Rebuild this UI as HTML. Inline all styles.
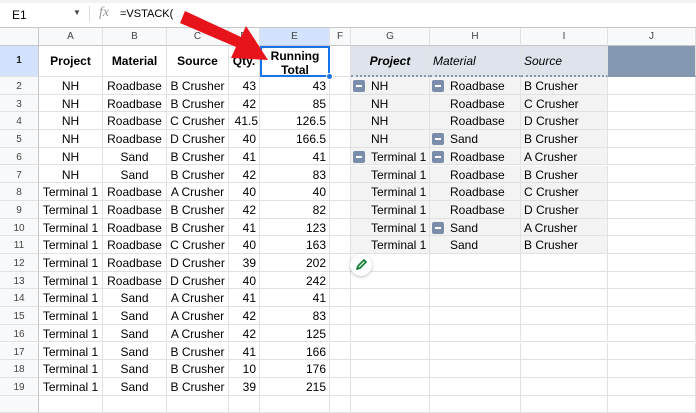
<!DOCTYPE html><html><head><style>
*{box-sizing:border-box;margin:0;padding:0}
body{width:696px;height:400px;overflow:hidden;background:#fff;font-family:"Liberation Sans",Arial,sans-serif;font-size:12px;color:#000;position:relative}
.r{position:absolute;left:0;width:696px;height:17.7px}
.c{position:absolute;top:0;height:100%;border-right:1px solid #e1e1e1;border-bottom:1px solid #e1e1e1;white-space:nowrap;overflow:visible;line-height:19px;padding:0 3px}
.n{left:0;width:39px;background:#f8f9fa;text-align:center;font-size:10px;color:#444;border-right:1px solid #c7c7c7}
.a{left:39px;width:64px;text-align:center}.b{left:103px;width:64px;text-align:center}.cc{left:167px;width:62px;text-align:center;padding:0}
.d{left:229px;width:31px;text-align:right}.e{left:260px;width:70px;text-align:right}.f{left:330px;width:21px}
.g{left:351px;width:79px}.h{left:430px;width:91px}.i{left:521px;width:87px}.j{left:608px;width:88px}
.p{background:#f3f3f3}
.g.p{padding-left:20px}.h.p{padding-left:20px}
.m{position:absolute;top:3px;width:12px;height:12px;background:#7a8dab;border-radius:2px}
.m:after{content:"";position:absolute;left:3px;top:5px;width:6px;height:2px;background:#fff}
.hd .c{background:#f8f9fa;text-align:center;font-size:10px;color:#444;line-height:18px;border-bottom:1px solid #c7c7c7}
.r1 .c{line-height:30px;font-weight:bold}
</style></head><body>
<div style="position:absolute;left:0;top:0;width:696px;height:28px;border-bottom:1px solid #c7c7c7;background:#fff;border-top:3px solid #f1f3f4">
<span style="position:absolute;left:12px;top:5px;font-size:12px">E1</span>
<span style="position:absolute;left:73px;top:5px;font-size:8px;color:#444">▼</span>
<span style="position:absolute;left:89px;top:3px;width:1px;height:16px;background:#ddd"></span>
<span style="position:absolute;left:99px;top:2px;font-family:'Liberation Serif',serif;font-style:italic;color:#999;font-size:14px">fx</span>
<span style="position:absolute;left:120px;top:5px;font-size:11px">=VSTACK(</span>
</div>
<div class="r hd" style="top:28px;height:18px">
<div class="c n" style="border-bottom:1px solid #c7c7c7"></div><div class="c a">A</div><div class="c b">B</div><div class="c cc">C</div><div class="c d">D</div><div class="c e" style="background:#d3e3fd;text-align:center">E</div><div class="c f">F</div><div class="c g">G</div><div class="c h">H</div><div class="c i">I</div><div class="c j">J</div>
</div>
<div class="r r1" style="top:46px;height:31px">
<div class="c n" style="background:#d3e3fd;font-weight:bold;color:#222;line-height:30px">1</div><div class="c a">Project</div><div class="c b">Material</div><div class="c cc">Source</div><div class="c d" style="text-align:center;padding:0">Qty.</div>
<div class="c e" style="text-align:center;line-height:14px;padding-top:1px;border:2px solid #1a73e8">Running<br>Total</div><div class="c f"></div>
<div class="c g" style="background:#dfe4ec;font-style:italic;text-align:center;border-bottom:2px dotted #8497b0">Project</div>
<div class="c h" style="background:#dfe4ec;font-style:italic;font-weight:normal;border-bottom:2px dotted #8497b0">Material</div>
<div class="c i" style="background:#dfe4ec;font-style:italic;font-weight:normal;border-bottom:2px dotted #8497b0">Source</div>
<div class="c j" style="background:#8497b0;border-bottom:2px solid #8497b0"></div>
</div>
<div style="position:absolute;left:326px;top:73px;width:7px;height:7px;border-radius:50%;background:#1a73e8;border:1px solid #fff;z-index:5"></div>

<div class="r" style="top:77px"><div class="c n">2</div><div class="c a">NH</div><div class="c b">Roadbase</div><div class="c cc">B Crusher</div><div class="c d">43</div><div class="c e">43</div><div class="c f"></div><div class="c g p"><span class="m" style="left:2px"></span>NH</div><div class="c h p"><span class="m" style="left:2px"></span>Roadbase</div><div class="c i p">B Crusher</div><div class="c j"></div></div>
<div class="r" style="top:94.7px"><div class="c n">3</div><div class="c a">NH</div><div class="c b">Roadbase</div><div class="c cc">B Crusher</div><div class="c d">42</div><div class="c e">85</div><div class="c f"></div><div class="c g p">NH</div><div class="c h p">Roadbase</div><div class="c i p">C Crusher</div><div class="c j"></div></div>
<div class="r" style="top:112.4px"><div class="c n">4</div><div class="c a">NH</div><div class="c b">Roadbase</div><div class="c cc">C Crusher</div><div class="c d" style="padding:0 1px">41.5</div><div class="c e">126.5</div><div class="c f"></div><div class="c g p">NH</div><div class="c h p">Roadbase</div><div class="c i p">D Crusher</div><div class="c j"></div></div>
<div class="r" style="top:130.1px"><div class="c n">5</div><div class="c a">NH</div><div class="c b">Roadbase</div><div class="c cc">D Crusher</div><div class="c d">40</div><div class="c e">166.5</div><div class="c f"></div><div class="c g p">NH</div><div class="c h p"><span class="m" style="left:2px"></span>Sand</div><div class="c i p">B Crusher</div><div class="c j"></div></div>
<div class="r" style="top:147.8px"><div class="c n">6</div><div class="c a">NH</div><div class="c b">Sand</div><div class="c cc">B Crusher</div><div class="c d">41</div><div class="c e">41</div><div class="c f"></div><div class="c g p"><span class="m" style="left:2px"></span>Terminal 1</div><div class="c h p"><span class="m" style="left:2px"></span>Roadbase</div><div class="c i p">A Crusher</div><div class="c j"></div></div>
<div class="r" style="top:165.5px"><div class="c n">7</div><div class="c a">NH</div><div class="c b">Sand</div><div class="c cc">B Crusher</div><div class="c d">42</div><div class="c e">83</div><div class="c f"></div><div class="c g p">Terminal 1</div><div class="c h p">Roadbase</div><div class="c i p">B Crusher</div><div class="c j"></div></div>
<div class="r" style="top:183.2px"><div class="c n">8</div><div class="c a">Terminal 1</div><div class="c b">Roadbase</div><div class="c cc">A Crusher</div><div class="c d">40</div><div class="c e">40</div><div class="c f"></div><div class="c g p">Terminal 1</div><div class="c h p">Roadbase</div><div class="c i p">C Crusher</div><div class="c j"></div></div>
<div class="r" style="top:200.9px"><div class="c n">9</div><div class="c a">Terminal 1</div><div class="c b">Roadbase</div><div class="c cc">B Crusher</div><div class="c d">42</div><div class="c e">82</div><div class="c f"></div><div class="c g p">Terminal 1</div><div class="c h p">Roadbase</div><div class="c i p">D Crusher</div><div class="c j"></div></div>
<div class="r" style="top:218.6px"><div class="c n">10</div><div class="c a">Terminal 1</div><div class="c b">Roadbase</div><div class="c cc">B Crusher</div><div class="c d">41</div><div class="c e">123</div><div class="c f"></div><div class="c g p">Terminal 1</div><div class="c h p"><span class="m" style="left:2px"></span>Sand</div><div class="c i p">A Crusher</div><div class="c j"></div></div>
<div class="r" style="top:236.3px"><div class="c n">11</div><div class="c a">Terminal 1</div><div class="c b">Roadbase</div><div class="c cc">C Crusher</div><div class="c d">40</div><div class="c e">163</div><div class="c f"></div><div class="c g p">Terminal 1</div><div class="c h p">Sand</div><div class="c i p">B Crusher</div><div class="c j"></div></div>
<div class="r" style="top:254px"><div class="c n">12</div><div class="c a">Terminal 1</div><div class="c b">Roadbase</div><div class="c cc">D Crusher</div><div class="c d">39</div><div class="c e">202</div><div class="c f"></div><div class="c g"></div><div class="c h"></div><div class="c i"></div><div class="c j"></div></div>
<div class="r" style="top:271.7px"><div class="c n">13</div><div class="c a">Terminal 1</div><div class="c b">Roadbase</div><div class="c cc">D Crusher</div><div class="c d">40</div><div class="c e">242</div><div class="c f"></div><div class="c g"></div><div class="c h"></div><div class="c i"></div><div class="c j"></div></div>
<div class="r" style="top:289.4px"><div class="c n">14</div><div class="c a">Terminal 1</div><div class="c b">Sand</div><div class="c cc">A Crusher</div><div class="c d">41</div><div class="c e">41</div><div class="c f"></div><div class="c g"></div><div class="c h"></div><div class="c i"></div><div class="c j"></div></div>
<div class="r" style="top:307.1px"><div class="c n">15</div><div class="c a">Terminal 1</div><div class="c b">Sand</div><div class="c cc">A Crusher</div><div class="c d">42</div><div class="c e">83</div><div class="c f"></div><div class="c g"></div><div class="c h"></div><div class="c i"></div><div class="c j"></div></div>
<div class="r" style="top:324.8px"><div class="c n">16</div><div class="c a">Terminal 1</div><div class="c b">Sand</div><div class="c cc">A Crusher</div><div class="c d">42</div><div class="c e">125</div><div class="c f"></div><div class="c g"></div><div class="c h"></div><div class="c i"></div><div class="c j"></div></div>
<div class="r" style="top:342.5px"><div class="c n">17</div><div class="c a">Terminal 1</div><div class="c b">Sand</div><div class="c cc">B Crusher</div><div class="c d">41</div><div class="c e">166</div><div class="c f"></div><div class="c g"></div><div class="c h"></div><div class="c i"></div><div class="c j"></div></div>
<div class="r" style="top:360.2px"><div class="c n">18</div><div class="c a">Terminal 1</div><div class="c b">Sand</div><div class="c cc">B Crusher</div><div class="c d">10</div><div class="c e">176</div><div class="c f"></div><div class="c g"></div><div class="c h"></div><div class="c i"></div><div class="c j"></div></div>
<div class="r" style="top:377.9px"><div class="c n">19</div><div class="c a">Terminal 1</div><div class="c b">Sand</div><div class="c cc">B Crusher</div><div class="c d">39</div><div class="c e">215</div><div class="c f"></div><div class="c g"></div><div class="c h"></div><div class="c i"></div><div class="c j"></div></div>
<div class="r" style="top:395.6px"><div class="c n"></div><div class="c a"></div><div class="c b"></div><div class="c cc"></div><div class="c d"></div><div class="c e"></div><div class="c f"></div><div class="c g"></div><div class="c h"></div><div class="c i"></div><div class="c j"></div></div>

<div style="position:absolute;left:350px;top:254px;width:22px;height:22px;border-radius:50%;background:#fff;box-shadow:0 1px 3px rgba(0,0,0,.25)">
<svg width="22" height="22" viewBox="0 0 22 22"><path d="M7 15 L8 12 L14 6 L16 8 L10 14 Z" fill="none" stroke="#188038" stroke-width="1.8" stroke-linejoin="round"/></svg></div>

<svg style="position:absolute;left:0;top:0" width="696" height="400">
<polygon points="185,11 241,37 246,26 268,60 231,58 236,47 180,23" fill="#e8141b"/>
</svg>
</body></html>
